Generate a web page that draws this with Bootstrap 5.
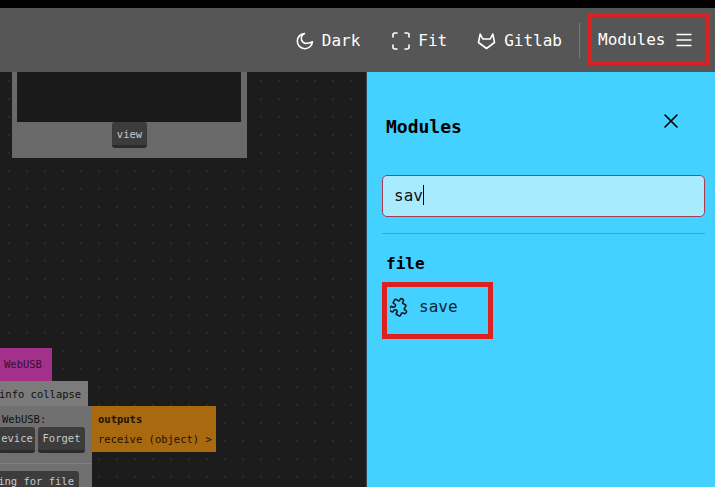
<!DOCTYPE html>
<html lang="en">
<head>
  <meta charset="UTF-8">
  <title>Modules</title>
  <meta name="viewport" content="width=device-width, initial-scale=1">
  <link href="https://cdn.jsdelivr.net/npm/bootstrap@5.3.3/dist/css/bootstrap.min.css" rel="stylesheet">
  <style>
    html, body {
      height: 100%;
      overflow: hidden;
    }
    body {
      background-color: #000;
      padding-top: 8px;
      font-family: "DejaVu Sans Mono", "Liberation Mono", monospace;
    }
    .app-shell {
      height: 479px;
      display: flex;
      flex-direction: column;
    }
    .top-bar {
      height: 64px;
      background-color: #565656;
      color: #fff;
      font-size: 16px;
      padding-right: 5px;
    }
    .bar-item {
      color: #fff;
      text-decoration: none;
      margin-right: 30px;
      padding-top: 1px;
    }
    .bar-item.item-dark {
      margin-right: 32px;
    }
    .bar-item.item-gitlab {
      margin-right: 0;
    }
    .bar-sep {
      width: 1px;
      height: 35px;
      margin-left: 17px;
      background-color: #7b7b7b;
    }
    .modules-toggle {
      border: 4px solid #dd2020;
      height: 52px;
      width: 122px;
      margin: -2px 0 0 8px;
      padding: 2px 0 0 6px;
    }
    .menu-icon {
      margin-left: 9px;
    }
    .body-row {
      min-height: 0;
    }
    .graph-canvas {
      flex: 1;
      position: relative;
      overflow: hidden;
      background-color: #1c1c1c;
      background-image: radial-gradient(#2b2b2b 1px, transparent 1px);
      background-size: 18px 18px;
    }
    .graph-node {
      position: absolute;
    }
    .view-node {
      left: 12px;
      top: -10px;
      width: 235px;
      height: 96px;
      background-color: #696969;
    }
    .view-screen {
      height: 60px;
      margin: 0 6px 0 5px;
      background-color: #1a1a1a;
    }
    .node-btn {
      background-color: #3c3c3c;
      border-bottom: 3px solid #2b2b2b;
      border-radius: 3px;
      color: #c8c8c8;
      font-size: 10.5px;
      line-height: 1;
    }
    .view-btn {
      display: block;
      width: 35px;
      margin: 0 0 0 100px;
      padding: 7px 0 5px;
      text-align: center;
    }
    .usb-title {
      left: 0;
      top: 276px;
      width: 52px;
      height: 33px;
      background-color: #a3318c;
      color: #36102f;
      font-size: 10.5px;
      padding: 9px 0 0 4px;
    }
    .usb-bar {
      left: 0;
      top: 309px;
      width: 88px;
      height: 25px;
      background-color: #7b7b7b;
      color: #111;
      font-size: 10.5px;
      padding-top: 6px;
      text-indent: -1px;
      white-space: nowrap;
    }
    .usb-body {
      left: 0;
      top: 334px;
      width: 92px;
      height: 90px;
      background-color: #707070;
      color: #111;
      font-size: 10.5px;
      white-space: nowrap;
    }
    .usb-label {
      left: 2px;
      top: 6px;
    }
    .usb-btn {
      top: 21px;
      height: 26px;
      padding-top: 6px;
      text-align: center;
      overflow: hidden;
    }
    .usb-device {
      left: -1px;
      width: 36px;
      direction: rtl;
    }
    .usb-forget {
      left: 38px;
      width: 47px;
    }
    .usb-rule {
      left: 0;
      right: 0;
      top: 57px;
      height: 1px;
      background-color: #7f7f7f;
    }
    .usb-file {
      left: -4px;
      top: 65px;
      width: 83px;
      height: 30px;
      padding: 5px 5px 0 0;
      text-align: right;
    }
    .outputs-node {
      left: 92px;
      top: 334px;
      width: 124px;
      height: 46px;
      background-color: #a8690f;
      color: #1d1204;
      font-size: 10.5px;
      padding: 6px 0 0 6px;
      white-space: nowrap;
    }
    .outputs-node b {
      display: block;
      margin-bottom: 4px;
    }
    .modules-panel {
      width: 349px;
      background-color: #45d1ff;
      border-left: 1px solid #3a4a52;
      color: #000;
      padding: 0 10px 0 15px;
    }
    .panel-head {
      padding: 44px 0 0 4px;
    }
    .panel-title {
      font-size: 18px;
      font-weight: 700;
      line-height: 22px;
      margin: 0;
    }
    .panel-close {
      margin: -3px 26px 0 0;
      line-height: 0;
    }
    .search-box {
      margin-top: 37px;
      height: 42px;
      background-color: #a8ebff;
      border: 1px solid #a83a55;
      border-radius: 5px;
      padding-left: 11px;
      font-size: 16px;
      line-height: 40px;
      color: #111;
    }
    .caret-mark {
      display: inline-block;
      width: 1px;
      height: 20px;
      background-color: #000;
      vertical-align: -4px;
    }
    .panel-rule {
      height: 1px;
      background-color: #31a9d8;
      margin-top: 16px;
    }
    .group-name {
      margin: 20px 0 0 4px;
      font-size: 16px;
      font-weight: 700;
      line-height: 20px;
    }
    .module-item {
      width: 111px;
      height: 57px;
      margin-top: 8px;
      border: 5px solid #dd2020;
      padding: 0 0 8px 3px;
      font-size: 16px;
      color: #0b2530;
    }
    .save-label {
      margin-left: 9px;
    }
  </style>
</head>
<body>

  <div class="app-shell">
    <!-- Top bar -->
    <div class="top-bar d-flex align-items-center justify-content-end">
      <a class="bar-item item-dark d-flex align-items-center gap-2" href="#">
        <svg width="18" height="18" viewBox="0 0 18 18" fill="none" stroke="#fff" stroke-width="1.6" stroke-linecap="round" stroke-linejoin="round"><path d="M8.5 1.5a7.6 7.6 0 1 0 8 8.2 5.6 5.6 0 0 1-4.300 1.300A4.900 4.900 0 0 1 8.500 1.500z"/></svg>
        <span>Dark</span>
      </a>
      <a class="bar-item d-flex align-items-center gap-2" href="#">
        <svg width="18" height="18" viewBox="0 0 18 18" fill="none" stroke="#fff" stroke-width="1.6" stroke-linecap="round" stroke-linejoin="round"><path d="M1 5V3a2 2 0 0 1 2-2h2M13 1h2a2 2 0 0 1 2 2v2M17 13v2a2 2 0 0 1-2 2h-2M5 17H3a2 2 0 0 1-2-2v-2"/></svg>
        <span>Fit</span>
      </a>
      <a class="bar-item item-gitlab d-flex align-items-center gap-2" href="#">
        <svg width="19" height="18" viewBox="0 0 19 18" fill="none" stroke="#fff" stroke-width="1.6" stroke-linecap="round" stroke-linejoin="round"><path d="M9.500 16.500 1.500 10.500 3.200 2l2.600 5h7.400l2.600-5 1.700 8.500z"/></svg>
        <span>Gitlab</span>
      </a>
      <div class="bar-sep"></div>
      <div class="modules-toggle d-flex align-items-center">
        <span>Modules</span>
        <svg class="menu-icon" width="18" height="14" viewBox="0 0 18 14" stroke="#fff" stroke-width="1.500" stroke-linecap="round"><path d="M3 1.500h14M3 7h14M3 12.500h14"/></svg>
      </div>
    </div>

    <div class="body-row d-flex flex-grow-1">
      <!-- Graph -->
      <div class="graph-canvas">
        <div class="graph-node view-node">
          <div class="view-screen"></div>
          <span class="node-btn view-btn">view</span>
        </div>
        <div class="graph-node usb-title">WebUSB</div>
        <div class="graph-node usb-bar">info collapse</div>
        <div class="graph-node usb-body">
          <span class="graph-node usb-label">WebUSB:</span>
          <span class="graph-node node-btn usb-btn usb-device">evice</span>
          <span class="graph-node node-btn usb-btn usb-forget">Forget</span>
          <div class="graph-node usb-rule"></div>
          <span class="graph-node node-btn usb-file">ing for file</span>
        </div>
        <div class="graph-node outputs-node">
          <b>outputs</b>
          <span>receive (object) &gt;</span>
        </div>
      </div>

      <!-- Modules panel -->
      <aside class="modules-panel">
        <div class="panel-head d-flex justify-content-between align-items-start">
          <h5 class="panel-title">Modules</h5>
          <svg class="panel-close" width="16" height="16" viewBox="0 0 16 16" stroke="#000" stroke-width="1.600" stroke-linecap="round"><path d="M2 2l12 12M14 2 2 14"/></svg>
        </div>
        <div class="search-box">sav<span class="caret-mark"></span></div>
        <div class="panel-rule"></div>
        <div class="group-name">file</div>
        <div class="module-item d-flex align-items-center">
          <svg class="flex-shrink-0" width="20" height="20" viewBox="1 1 22 22" fill="none" stroke="#0b1a20" stroke-width="1.700" stroke-linecap="round" stroke-linejoin="round"><g transform="rotate(30 12 12)"><path d="M4 7h3a1 1 0 0 0 1-1v-1a2 2 0 0 1 4 0v1a1 1 0 0 0 1 1h3a1 1 0 0 1 1 1v3a1 1 0 0 0 1 1h1a2 2 0 0 1 0 4h-1a1 1 0 0 0-1 1v3a1 1 0 0 1-1 1h-3a1 1 0 0 1-1-1v-1a2 2 0 0 0-4 0v1a1 1 0 0 1-1 1h-3a1 1 0 0 1-1-1v-3a1 1 0 0 1 1-1h1a2 2 0 0 0 0-4h-1a1 1 0 0 1-1-1v-3a1 1 0 0 1 1-1"/></g></svg>
          <span class="save-label">save</span>
        </div>
      </aside>
    </div>
  </div>

<script src="https://cdn.jsdelivr.net/npm/bootstrap@5.3.3/dist/js/bootstrap.bundle.min.js"></script>
</body>
</html>
